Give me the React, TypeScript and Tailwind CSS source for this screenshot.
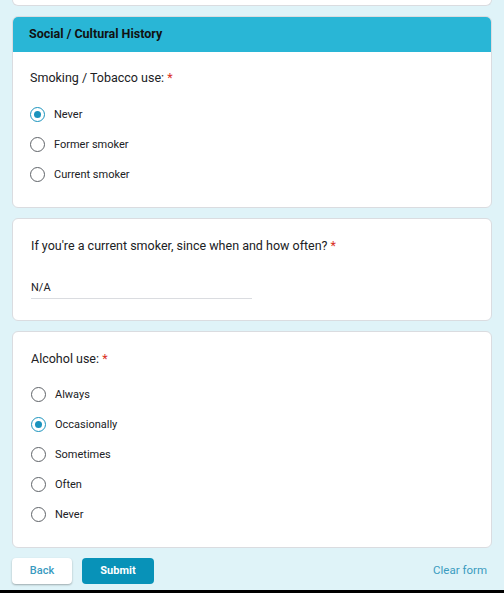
import { useState } from "react";

const smokingOptions = ["Never", "Former smoker", "Current smoker"];
const alcoholOptions = ["Always", "Occasionally", "Sometimes", "Often", "Never"];

function Radio({ label, checked, onClick }: { label: string; checked: boolean; onClick: () => void }) {
  return (
    <div className="flex items-center h-[30px] cursor-pointer" onClick={onClick}>
      <span
        className={`w-[15px] h-[15px] rounded-full border-[1.5px] flex items-center justify-center ${
          checked ? "border-[#1a93bd]" : "border-[#5f6368]"
        }`}
      >
        {checked && <span className="w-[7px] h-[7px] rounded-full bg-[#1a93bd]"></span>}
      </span>
      <span className="ml-[9px] text-[11px] text-[#202124]">{label}</span>
    </div>
  );
}

export default function App() {
  const [smoking, setSmoking] = useState(0);
  const [alcohol, setAlcohol] = useState(1);

  return (
    <div className="h-[593px] bg-[#dff3f8] flex flex-col font-['Roboto',sans-serif] overflow-hidden">
      <div className="px-[12px] flex flex-col gap-[10px]">
        {/* PREVIOUS CARD (scrolled) */}
        <div className="h-[6px] bg-white rounded-b-[6px] border border-t-0 border-[#dadce0]"></div>

        {/* SECTION HEADER + SMOKING */}
        <div className="h-[192px] bg-white rounded-[6px] border border-[#dadce0] overflow-hidden">
          <div className="h-[36px] bg-[#29b6d6] flex items-center px-[17px] -mx-px -mt-px">
            <span className="text-[12.5px] font-bold text-[#111]">Social / Cultural History</span>
          </div>
          <div className="px-[17px] pt-[17px]">
            <div className="text-[12.5px] text-[#202124]">
              Smoking / Tobacco use: <span className="text-[#d93025]">*</span>
            </div>
            <div className="mt-[12px]">
              {smokingOptions.map((o, i) => (
                <Radio key={o} label={o} checked={smoking === i} onClick={() => setSmoking(i)} />
              ))}
            </div>
          </div>
        </div>

        {/* CURRENT SMOKER */}
        <div className="h-[103px] bg-white rounded-[6px] border border-[#dadce0] px-[18px] pt-[18px]">
          <div className="text-[12.5px] text-[#202124]">
            If you're a current smoker, since when and how often? <span className="text-[#d93025]">*</span>
          </div>
          <div className="mt-[24px] w-[221px] border-b border-[#dadce0] pb-[2px] text-[11px] text-[#202124]">N/A</div>
        </div>

        {/* ALCOHOL */}
        <div className="h-[217px] bg-white rounded-[6px] border border-[#dadce0] px-[18px] pt-[18px]">
          <div className="text-[12.5px] text-[#202124]">
            Alcohol use: <span className="text-[#d93025]">*</span>
          </div>
          <div className="mt-[11px]">
            {alcoholOptions.map((o, i) => (
              <Radio key={o + i} label={o} checked={alcohol === i} onClick={() => setAlcohol(i)} />
            ))}
          </div>
        </div>

        {/* BUTTONS */}
        <div className="flex items-center h-[26px]">
          <button className="h-[26px] w-[60px] bg-white rounded-[4px] shadow-[0_1px_2px_rgba(0,0,0,0.3)] text-[11px] font-medium text-[#3a9bbf]">
            Back
          </button>
          <button className="ml-[10px] h-[26px] w-[72px] bg-[#0892b8] rounded-[4px] text-[11px] font-bold text-white">
            Submit
          </button>
          <span className="ml-auto mr-[5px] text-[11.5px] text-[#3a9bbf]">Clear form</span>
        </div>
      </div>
      <div className="mt-auto h-[3px] bg-black"></div>
    </div>
  );
}
